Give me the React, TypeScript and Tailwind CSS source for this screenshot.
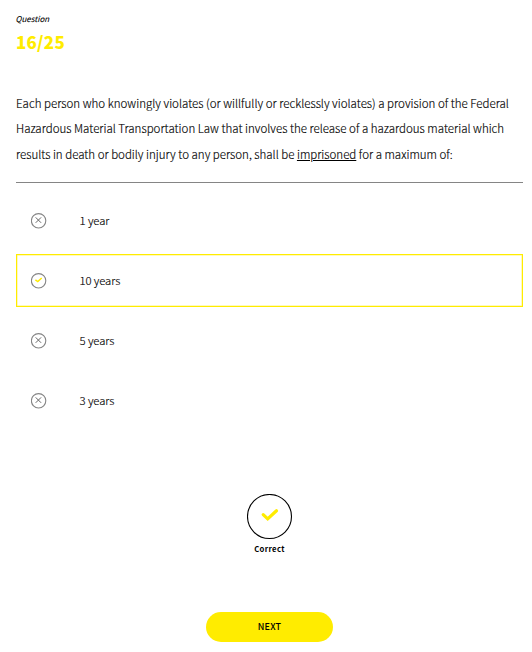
const XIcon = () => (
  <svg width="16" height="16" viewBox="0 0 16 16" fill="none" className="shrink-0">
    <circle cx="7.6" cy="7.8" r="7.2" stroke="#858585" strokeWidth="1.1" />
    <path d="M4.7 4.4L10.1 9.8M10.1 4.4L4.7 9.8" stroke="#666" strokeWidth="1" />
  </svg>
);

const CheckIcon = () => (
  <svg width="16" height="16" viewBox="0 0 16 16" fill="none" className="shrink-0">
    <circle cx="7.6" cy="7.8" r="7.2" stroke="#858585" strokeWidth="1.1" />
    <path d="M4.4 6.8L6.8 8.5L10.7 5" stroke="#ffec00" strokeWidth="1.5" />
  </svg>
);

const answers = [
  { text: '1 year', correct: false },
  { text: '10 years', correct: true },
  { text: '5 years', correct: false },
  { text: '3 years', correct: false },
];

export default function App() {
  return (
    <main className="h-[652px] w-[532px] overflow-hidden bg-white pr-[9px] pl-4 font-['Noto_Sans_CJK_SC',sans-serif] text-black">
      <p className="-ml-px pt-3 pl-[0.5px] text-[8px] leading-[14px] font-normal italic [-webkit-text-stroke:0.1px]">Question</p>
      <p className="mt-[6px] text-[17px] leading-5 font-black tracking-[0.2px] text-[#ffec00]">16/25</p>
      <div className="mt-[38.6px] text-[11.5px] leading-[25.6px] font-light whitespace-nowrap [-webkit-text-stroke:0.15px]">
        <p className="tracking-[0.01px]">Each person who knowingly violates (or willfully or recklessly violates) a provision of the Federal</p>
        <p className="tracking-[0.01px]">Hazardous Material Transportation Law that involves the release of a hazardous material which</p>
        <p>results in death or bodily injury to any person, shall be <u>imprisoned</u> for a maximum of:</p>
      </div>
      <hr className="mt-[14.4px] border-t border-[#858585]" />
      <ul className="mt-[11px] flex flex-col gap-[7px]">
        {answers.map((a) => (
          <li
            key={a.text}
            className={`flex h-[53px] items-center gap-[32.5px] border-[1.5px] pt-px pl-[14px] text-[11.3px] font-light tracking-[-0.08px] [-webkit-text-stroke:0.15px] ${a.correct ? 'border-[#ffec00] shadow-[inset_0_0_0_0.5px_#fff47a]' : 'border-transparent'}`}
          >
            {a.correct ? <CheckIcon /> : <XIcon />}
            <span className="pb-px">{a.text}</span>
          </li>
        ))}
      </ul>
      <div className="mt-[67px] flex flex-col items-center">
        <svg width="46" height="46" viewBox="0 0 46 46" fill="none">
          <circle cx="22.5" cy="22.5" r="22" stroke="#000" strokeWidth="1.1" />
          <path d="M16.2 20.6L20.7 24.9L29.5 16.8" stroke="#ffec00" strokeWidth="3.2" strokeLinecap="round" />
        </svg>
        <p className="mt-[2px] text-[7.7px] leading-[14px] font-bold tracking-[0.35px]">Correct</p>
        <button className="mt-[56px] h-[30px] w-[127px] rounded-full bg-[#ffec00] text-[9px] font-medium tracking-[0.2px]">NEXT</button>
      </div>
    </main>
  );
}
